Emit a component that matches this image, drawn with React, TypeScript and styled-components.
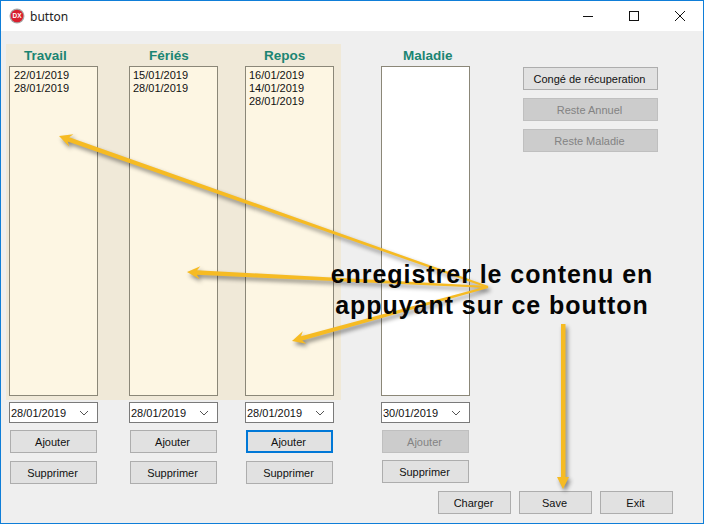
import styled, { createGlobalStyle } from "styled-components";

const GlobalStyle = createGlobalStyle`
  html, body {
    margin: 0;
    padding: 0;
    background: #efefef;
  }
  * {
    box-sizing: border-box;
  }
`;

const Window = styled.div`
  position: relative;
  display: flex;
  flex-direction: column;
  width: 704px;
  height: 524px;
  overflow: hidden;
  border: 1px solid #0f7ed8;
  background-color: #efefef;
  font-family: "Liberation Sans", Arial, sans-serif;
  font-size: 11px;
  color: #111;
`;

const TitleBar = styled.div`
  display: flex;
  align-items: center;
  height: 30px;
  padding-left: 8px;
  background-color: #fff;
`;

const TitleText = styled.span`
  flex: 1;
  margin-left: 5px;
  font-family: "Noto Sans", sans-serif;
  font-size: 12px;
  color: #222;
`;

const WindowButton = styled.div`
  display: flex;
  align-items: center;
  justify-content: center;
  width: 46px;
  height: 30px;
`;

const Content = styled.div`
  display: flex;
  flex-direction: column;
  padding: 13px 0 0 5px;
`;

const TopRow = styled.div`
  display: flex;
  height: 356px;
`;

const Panel = styled.div`
  display: flex;
  width: 335px;
  padding-left: 3px;
  background-color: #f0e9d8;
`;

const Column = styled.div<{ $offset: number }>`
  display: flex;
  flex-direction: column;
  width: 89px;
  margin-left: ${(props) => props.$offset}px;
`;

const Heading = styled.div<{ $indent: number }>`
  height: 22px;
  padding-top: 1px;
  padding-left: ${(props) => props.$indent}px;
  font-size: 13.5px;
  font-weight: 700;
  line-height: 21px;
  color: #1b8573;
`;

const DateList = styled.div<{ $blank?: boolean; $inset?: number }>`
  display: flex;
  flex-direction: column;
  height: 330px;
  padding: 2px ${(props) => props.$inset ?? 3}px;
  border: 1px solid #8b8778;
  background-color: ${(props) => (props.$blank ? "#fff" : "#fdf6e3")};
  line-height: 13px;
`;

const SideColumn = styled.div`
  display: flex;
  flex-direction: column;
  gap: 8px;
  width: 135px;
  margin-left: 53px;
  padding-top: 23px;
`;

const ControlsRow = styled.div`
  display: flex;
  margin-top: 2px;
  padding-left: 3px;
`;

const Controls = styled.div<{ $offset: number }>`
  display: flex;
  flex-direction: column;
  align-items: center;
  gap: 8px;
  width: 89px;
  margin-left: ${(props) => props.$offset}px;
`;

const DatePicker = styled.div`
  display: flex;
  align-items: center;
  justify-content: space-between;
  width: 89px;
  height: 21px;
  margin-bottom: -1px;
  padding: 0 8px 0 1px;
  border: 1px solid #7a7a7a;
  background-color: #fff;
`;

const Button = styled.div<{ $width?: number; $disabled?: boolean; $focused?: boolean; $raised?: boolean }>`
  display: flex;
  align-items: center;
  justify-content: center;
  width: ${(props) => props.$width ?? 87}px;
  height: 23px;
  margin-top: ${(props) => (props.$raised ? -1 : 0)}px;
  padding-right: 2px;
  border: ${(props) => (props.$focused ? "2px solid #0078d7" : "1px solid")};
  border-color: ${(props) =>
    props.$focused ? "#0078d7" : props.$disabled ? "#bfbfbf" : "#adadad"};
  background-color: ${(props) => (props.$disabled ? "#cccccc" : "#e1e1e1")};
  color: ${(props) => (props.$disabled ? "#838383" : "#111")};
`;

const Footer = styled.div`
  display: flex;
  gap: 8px;
  margin-top: 7px;
  margin-left: 432px;
`;

const ArrowLayer = styled.svg`
  position: absolute;
  top: -1px;
  left: -1px;
  filter: drop-shadow(2px 3px 2px rgba(0, 0, 0, 0.45));
`;

const Annotation = styled.div`
  position: absolute;
  top: 258px;
  left: 329px;
  width: 324px;
  font-size: 25px;
  font-weight: 700;
  line-height: 31px;
  letter-spacing: 0.95px;
  text-align: center;
  white-space: nowrap;
  color: #050505;
`;

const columns = [
  { name: "Travail", indent: 15, offset: 0, inset: 4, dates: ["22/01/2019", "28/01/2019"] },
  { name: "Fériés", indent: 20, offset: 31, inset: 3, dates: ["15/01/2019", "28/01/2019"] },
  { name: "Repos", indent: 19, offset: 27, inset: 3, dates: ["16/01/2019", "14/01/2019", "28/01/2019"] },
];

const controls = [
  { date: "28/01/2019", offset: 0 },
  { date: "28/01/2019", offset: 31 },
  { date: "28/01/2019", offset: 27, focused: true },
  { date: "30/01/2019", offset: 47, disabled: true, raised: true },
];

type Point = [number, number];

const arrowPoints = (tail: Point, tip: Point) => {
  const dx = tip[0] - tail[0];
  const dy = tip[1] - tail[1];
  const len = Math.hypot(dx, dy);
  const ux = dx / len;
  const uy = dy / len;
  const at = (along: number, side: number) =>
    `${tip[0] - ux * along - uy * side},${tip[1] - uy * along + ux * side}`;
  return [
    at(0, 0),
    at(13, 6.5),
    at(10, 2.3),
    at(len, 1),
    at(len, -1),
    at(10, -2.3),
    at(13, -6.5),
  ].join(" ");
};

const arrows: Point[][] = [
  [[488, 287], [59, 136]],
  [[488, 287], [187, 272]],
  [[488, 287], [292, 341]],
];

const Chevron = () => (
  <svg width="10" height="6" viewBox="0 0 10 6">
    <path d="M1 1l4 4 4-4" fill="none" stroke="#555" strokeWidth="1" />
  </svg>
);

const AppIcon = () => (
  <svg width="16" height="16" viewBox="0 0 16 16">
    <circle cx="8" cy="8" r="7.5" fill="#a9a9a9" />
    <circle cx="8" cy="8" r="6.3" fill="#d9202f" />
    <text x="8" y="10.2" textAnchor="middle" fontSize="6.5" fontWeight="700" fontFamily="Liberation Sans" fill="#fff">
      DX
    </text>
  </svg>
);

export default function App() {
  return (
    <>
      <GlobalStyle />
      <Window>
        <TitleBar>
          <AppIcon />
          <TitleText>button</TitleText>
          <WindowButton>
            <svg width="10" height="10" viewBox="0 0 10 10">
              <path d="M0 5.5h10" stroke="#111" strokeWidth="1" />
            </svg>
          </WindowButton>
          <WindowButton>
            <svg width="10" height="10" viewBox="0 0 10 10">
              <rect x="0.5" y="0.5" width="9" height="9" fill="none" stroke="#111" strokeWidth="1" />
            </svg>
          </WindowButton>
          <WindowButton>
            <svg width="10" height="10" viewBox="0 0 10 10">
              <path d="M0 0l10 10M10 0L0 10" stroke="#111" strokeWidth="1" />
            </svg>
          </WindowButton>
        </TitleBar>
        <Content>
          <TopRow>
            <Panel>
              {columns.map((c) => (
                <Column key={c.name} $offset={c.offset}>
                  <Heading $indent={c.indent}>{c.name}</Heading>
                  <DateList $inset={c.inset}>
                    {c.dates.map((d) => (
                      <span key={d}>{d}</span>
                    ))}
                  </DateList>
                </Column>
              ))}
            </Panel>
            <Column $offset={40}>
              <Heading $indent={22}>Maladie</Heading>
              <DateList $blank />
            </Column>
            <SideColumn>
              <Button $width={135}>Congé de récuperation</Button>
              <Button $width={135} $disabled>
                Reste Annuel
              </Button>
              <Button $width={135} $disabled>
                Reste Maladie
              </Button>
            </SideColumn>
          </TopRow>
          <ControlsRow>
            {controls.map((c, idx) => (
              <Controls key={idx} $offset={c.offset}>
                <DatePicker>
                  {c.date}
                  <Chevron />
                </DatePicker>
                <Button $focused={c.focused} $disabled={c.disabled}>
                  Ajouter
                </Button>
                <Button $raised={c.raised}>Supprimer</Button>
              </Controls>
            ))}
          </ControlsRow>
          <Footer>
            <Button $width={73}>Charger</Button>
            <Button $width={73}>Save</Button>
            <Button $width={73}>Exit</Button>
          </Footer>
        </Content>
        <ArrowLayer width="704" height="524" viewBox="0 0 704 524">
          {arrows.map(([tail, tip], idx) => (
            <polygon key={idx} points={arrowPoints(tail, tip)} fill="#f6bb23" />
          ))}
          <polygon points="561,324 565.5,324 565.5,477 569,477 563,489 557,477 561,477" fill="#f6bb23" />
        </ArrowLayer>
        <Annotation>
          enregistrer le contenu en
          <br />
          appuyant sur ce boutton
        </Annotation>
      </Window>
    </>
  );
}
